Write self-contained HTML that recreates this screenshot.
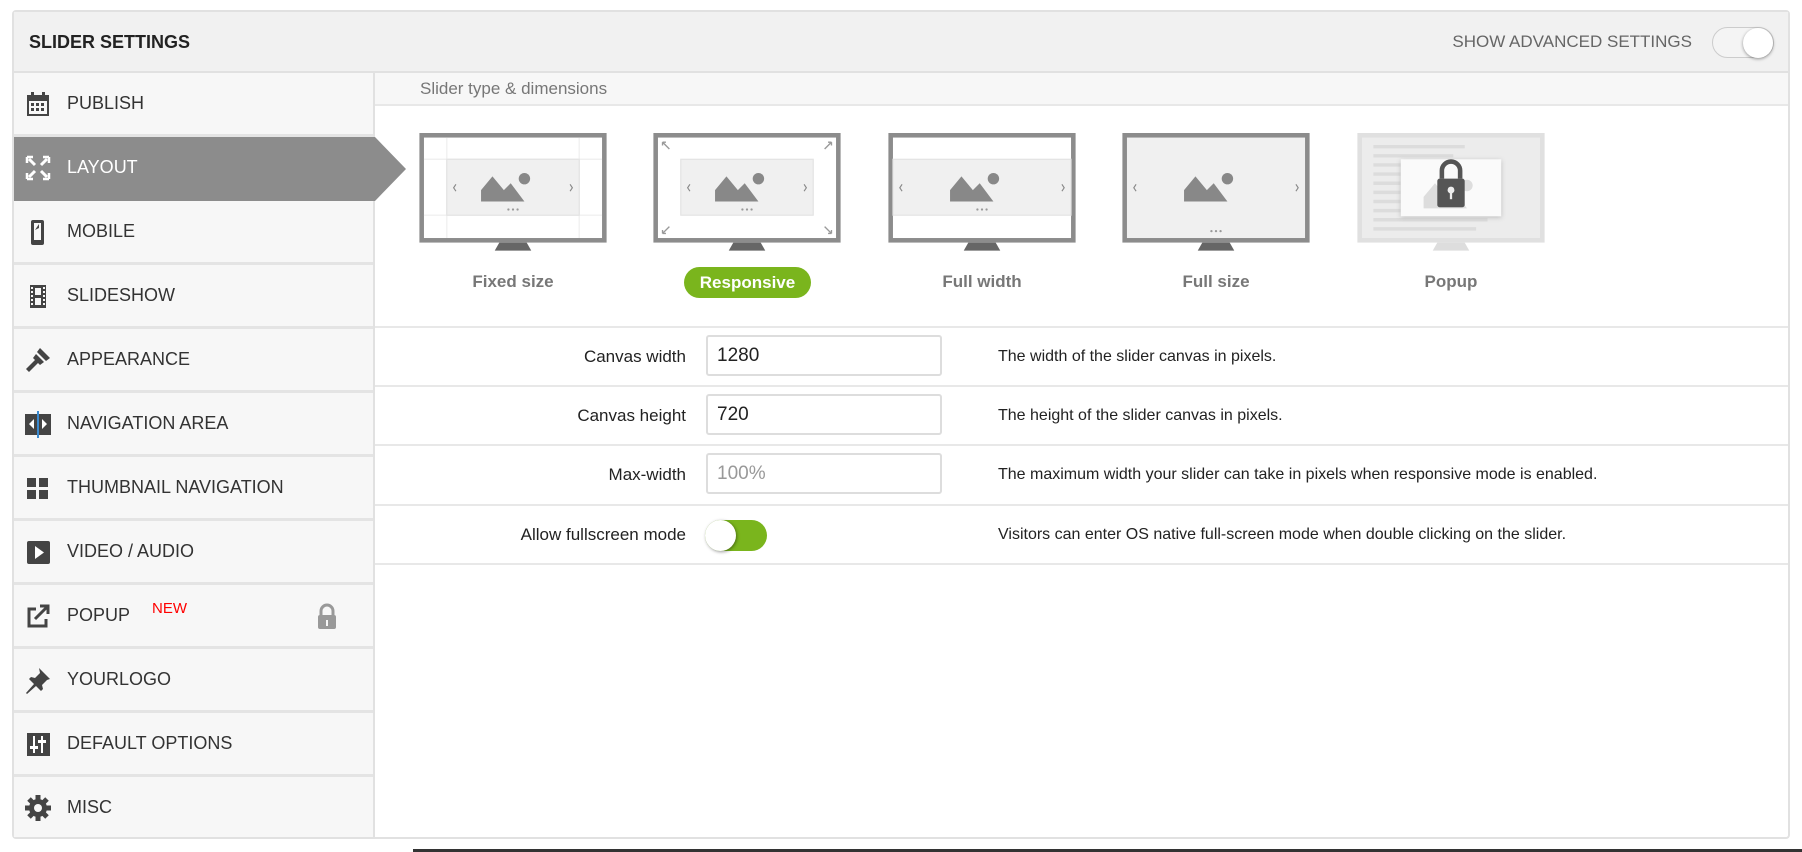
<!DOCTYPE html>
<html><head><meta charset="utf-8"><style>
*{box-sizing:border-box;margin:0;padding:0}
body{width:1802px;height:852px;background:#fff;font-family:"Liberation Sans",Arial,sans-serif;position:relative;overflow:hidden}
.panel{position:absolute;left:12px;top:10px;width:1778px;height:829px;border:2px solid #e1e1e1;border-radius:4px;background:#fff;overflow:visible}
.hdr{position:absolute;left:0;top:0;right:0;height:61px;background:#f1f1f1;border-bottom:2px solid #e1e1e1}
.hdr .t{position:absolute;left:15px;top:20px;font-size:18px;font-weight:bold;color:#222}
.hdr .a{position:absolute;right:96px;top:20px;font-size:17px;color:#666}
.tog{position:absolute;right:14px;top:15px;width:62px;height:31px;border-radius:16px;background:#f4f4f4;border:1px solid #ccc}
.tog i{position:absolute;right:0;top:0;width:30px;height:30px;border-radius:50%;background:#fff;box-shadow:0 1px 3px rgba(0,0,0,.4)}
.side{position:absolute;left:0;top:61px;width:361px;bottom:0;background:#f7f7f7;border-right:2px solid #e1e1e1}
.row{position:absolute;left:0;width:359px;height:64px;border-bottom:3px solid #e4e4e4;font-size:18px;color:#333}
.row span{position:absolute;left:53px;top:20px}
.row svg{position:absolute;left:10px;top:17px}
.row.act{background:#8c8c8c;color:#fff;border-bottom-color:#8c8c8c;width:361px}
.row.act:after{content:"";position:absolute;left:361px;top:0;border-left:31px solid #8c8c8c;border-top:32px solid transparent;border-bottom:32px solid transparent}
.sec{position:absolute;left:361px;right:0;top:61px;height:33px;background:#f7f7f7;border-bottom:2px solid #e8e8e8;font-size:17px;color:#777;padding:6px 0 0 45px}
.mon{position:absolute;top:121px}
.lbl{position:absolute;top:260px;font-size:17px;font-weight:bold;color:#777;text-align:center;width:188px}
.pill{position:absolute;left:670px;top:255px;width:127px;height:31px;border-radius:16px;background:#7ab51d;color:#fff;font-weight:bold;font-size:17px;text-align:center;line-height:31px}
.line{position:absolute;left:361px;right:0;height:2px;background:#e8e8e8}
.fl{position:absolute;right:1102px;font-size:17px;color:#222;text-align:right;width:300px}
.inp{position:absolute;left:692px;width:236px;height:41px;border:2px solid #ddd;border-radius:3px;font-size:19px;color:#222;padding:8px 0 0 9px}
.desc{position:absolute;left:984px;font-size:16px;color:#222}
.ft{position:absolute;left:691px;top:508px;width:62px;height:31px;border-radius:16px;background:#7ab51d}
.ft i{position:absolute;left:0;top:0;width:31px;height:31px;border-radius:50%;background:#fff;box-shadow:1px 1px 3px rgba(0,0,0,.4)}
</style></head><body>
<div class="panel">
<div class="hdr"><div class="t">SLIDER SETTINGS</div><div class="a">SHOW ADVANCED SETTINGS</div><div class="tog"><i></i></div></div>
<div class="side">
<div class="row" style="top:0"><svg width="28" height="28" viewBox="0 0 28 28"><rect x="3" y="5" width="22" height="21" fill="#444"/><rect x="5" y="11" width="18" height="13" fill="#f7f7f7"/><rect x="7" y="2" width="3" height="6" fill="#444"/><rect x="18" y="2" width="3" height="6" fill="#444"/><g fill="#444"><rect x="7" y="13" width="3" height="3"/><rect x="12" y="13" width="3" height="3"/><rect x="17" y="13" width="3" height="3"/><rect x="7" y="18" width="3" height="3"/><rect x="12" y="18" width="3" height="3"/><rect x="17" y="18" width="3" height="3"/></g></svg><span>PUBLISH</span></div>
<div class="row act" style="top:64px"><svg width="28" height="28" viewBox="0 0 28 28" stroke="#fff" stroke-width="3" fill="none"><path d="M5 5l6 6M23 5l-6 6M5 23l6-6M23 23l-6-6"/><path d="M3 3h6M3 3v6M25 3h-6M25 3v6M3 25h6M3 25v-6M25 25h-6M25 25v-6" stroke-width="2.5"/></svg><span>LAYOUT</span></div>
<div class="row" style="top:128px"><svg width="28" height="28" viewBox="0 0 28 28"><rect x="7" y="2" width="13" height="25" rx="2" fill="#444"/><rect x="10" y="5" width="7" height="17" fill="#f7f7f7"/><path d="M11 12l4-6v4z" fill="#444"/></svg><span>MOBILE</span></div>
<div class="row" style="top:192px"><svg width="28" height="28" viewBox="0 0 28 28"><rect x="6" y="3" width="16" height="23" fill="#444"/><rect x="11" y="6" width="6" height="7" fill="#f7f7f7"/><rect x="11" y="16" width="6" height="7" fill="#f7f7f7"/><g fill="#f7f7f7"><rect x="7" y="5" width="2" height="2"/><rect x="7" y="9" width="2" height="2"/><rect x="7" y="13" width="2" height="2"/><rect x="7" y="17" width="2" height="2"/><rect x="7" y="21" width="2" height="2"/><rect x="19" y="5" width="2" height="2"/><rect x="19" y="9" width="2" height="2"/><rect x="19" y="13" width="2" height="2"/><rect x="19" y="17" width="2" height="2"/><rect x="19" y="21" width="2" height="2"/></g></svg><span>SLIDESHOW</span></div>
<div class="row" style="top:256px"><svg width="28" height="28" viewBox="0 0 28 28" fill="#444"><path d="M16 2l10 10-4 3-9-9z"/><path d="M12 8l8 8-4 3-2-2-9 9-3-3 9-9-2-2z"/></svg><span>APPEARANCE</span></div>
<div class="row" style="top:320px"><svg width="28" height="28" viewBox="0 0 28 28"><rect x="1" y="4" width="26" height="21" fill="#444"/><rect x="13" y="1" width="2" height="28" fill="#3a8ad0"/><path d="M10 9l-5 5 5 5zM18 9l5 5-5 5z" fill="#fff"/></svg><span>NAVIGATION AREA</span></div>
<div class="row" style="top:384px"><svg width="28" height="28" viewBox="0 0 28 28" fill="#444"><rect x="3" y="4" width="9" height="9"/><rect x="15" y="4" width="9" height="9"/><rect x="3" y="16" width="9" height="9"/><rect x="15" y="16" width="9" height="9"/></svg><span>THUMBNAIL NAVIGATION</span></div>
<div class="row" style="top:448px"><svg width="28" height="28" viewBox="0 0 28 28"><rect x="3" y="3" width="23" height="23" rx="2" fill="#444"/><path d="M11 8v13l9-6.5z" fill="#fff"/></svg><span>VIDEO / AUDIO</span></div>
<div class="row" style="top:512px"><svg width="28" height="28" viewBox="0 0 28 28" fill="none" stroke="#444" stroke-width="3"><path d="M12 7H5v17h17v-7"/><path d="M11 17L23 5M16 4h8v8" /></svg><span>POPUP</span><b style="position:absolute;left:138px;top:15px;font-weight:normal;color:#f00;font-size:15px">NEW</b><svg style="left:302px;top:18px" width="22" height="28" viewBox="0 0 22 28"><path d="M5 12V8a6 6 0 0 1 12 0v4" fill="none" stroke="#999" stroke-width="3"/><rect x="2" y="12" width="18" height="14" rx="2" fill="#999"/><rect x="10" y="17" width="2" height="6" fill="#f7f7f7"/></svg></div>
<div class="row" style="top:576px"><svg width="28" height="28" viewBox="0 0 28 28" fill="#444"><path d="M15 2l11 11-3 1-5 5 1 4-2 2-5-5-9 8-1-1 8-9-5-5 2-2 4 1 5-5z"/></svg><span>YOURLOGO</span></div>
<div class="row" style="top:640px"><svg width="28" height="28" viewBox="0 0 28 28"><rect x="3" y="3" width="23" height="23" fill="#444"/><g fill="#fff"><rect x="9" y="6" width="2" height="17"/><rect x="17" y="6" width="2" height="17"/><rect x="6" y="16" width="8" height="3"/><rect x="14" y="10" width="8" height="3"/></g></svg><span>DEFAULT OPTIONS</span></div>
<div class="row" style="top:704px;border-bottom:none"><svg width="28" height="28" viewBox="0 0 28 28"><g fill="#444"><circle cx="14" cy="14" r="9"/><g stroke="#444" stroke-width="5"><path d="M14 1v26M1 14h26M5 5l18 18M23 5L5 23"/></g></g><circle cx="14" cy="14" r="4" fill="#f7f7f7"/></svg><span>MISC</span></div>
</div>
<div class="sec">Slider type &amp; dimensions</div>

<svg class="mon" style="left:405px" width="188" height="121" viewBox="0 0 164 106"><rect x="2" y="2" width="160" height="92" fill="#fff" stroke="#8c8c8c" stroke-width="4"/><g stroke="#eee"><path d="M24 4v88M140 4v88M4 23h156M4 72h156"/></g><rect x="24" y="23" width="116" height="49" fill="#f0f0f0" stroke="#e2e2e2"/><path d="M54 60V50l10-12 10 12 6-6 12 16z" fill="#888"/><circle cx="92" cy="40" r="5" fill="#888"/><path d="M32 45l-2 3 2 3M132 45l2 3-2 3" stroke="#888" fill="none"/><g fill="#999"><circle cx="78" cy="67" r="1"/><circle cx="82" cy="67" r="1"/><circle cx="86" cy="67" r="1"/></g><path d="M70 96h24l4 7H66z" fill="#666"/></svg>
<svg class="mon" style="left:639px" width="188" height="121" viewBox="0 0 164 106"><rect x="2" y="2" width="160" height="92" fill="#fff" stroke="#8c8c8c" stroke-width="4"/><rect x="24" y="23" width="116" height="49" fill="#f0f0f0" stroke="#e2e2e2"/><path d="M54 60V50l10-12 10 12 6-6 12 16z" fill="#888"/><circle cx="92" cy="40" r="5" fill="#888"/><path d="M32 45l-2 3 2 3M132 45l2 3-2 3" stroke="#888" fill="none"/><g fill="#999"><circle cx="78" cy="67" r="1"/><circle cx="82" cy="67" r="1"/><circle cx="86" cy="67" r="1"/></g><g stroke="#999" stroke-width="1.2" fill="none"><path d="M8 8l6 6M8 8h3M8 8v3M156 8l-6 6M156 8h-3M156 8v3M8 88l6-6M8 88h3M8 88v-3M156 88l-6-6M156 88h-3M156 88v-3"/></g><path d="M70 96h24l4 7H66z" fill="#666"/></svg>
<svg class="mon" style="left:874px" width="188" height="121" viewBox="0 0 164 106"><rect x="2" y="2" width="160" height="92" fill="#fff" stroke="#8c8c8c" stroke-width="4"/><rect x="4" y="23" width="156" height="49" fill="#f0f0f0" stroke="#e2e2e2"/><path d="M54 60V50l10-12 10 12 6-6 12 16z" fill="#888"/><circle cx="92" cy="40" r="5" fill="#888"/><path d="M12 45l-2 3 2 3M152 45l2 3-2 3" stroke="#888" fill="none"/><g fill="#999"><circle cx="78" cy="67" r="1"/><circle cx="82" cy="67" r="1"/><circle cx="86" cy="67" r="1"/></g><path d="M70 96h24l4 7H66z" fill="#666"/></svg>
<svg class="mon" style="left:1108px" width="188" height="121" viewBox="0 0 164 106"><rect x="2" y="2" width="160" height="92" fill="#f0f0f0" stroke="#8c8c8c" stroke-width="4"/><path d="M54 60V50l10-12 10 12 6-6 12 16z" fill="#888"/><circle cx="92" cy="40" r="5" fill="#888"/><path d="M12 45l-2 3 2 3M152 45l2 3-2 3" stroke="#888" fill="none"/><g fill="#999"><circle cx="78" cy="86" r="1"/><circle cx="82" cy="86" r="1"/><circle cx="86" cy="86" r="1"/></g><path d="M70 96h24l4 7H66z" fill="#666"/></svg>
<svg class="mon" style="left:1343px" width="188" height="121" viewBox="0 0 164 106"><rect x="2" y="2" width="160" height="92" fill="#ececec" stroke="#e0e0e0" stroke-width="4"/><g stroke="#dcdcdc" stroke-width="3"><path d="M14 12h80M14 20h70M14 28h90M14 36h100M14 44h90M14 52h105M14 60h85M14 68h95M14 76h100M14 84h90"/></g><rect x="38" y="23" width="88" height="50" fill="#fafafa" style="filter:drop-shadow(0 1px 2px #bbb)"/><path d="M58 66V56l10-12 10 12 6-6 12 16z" fill="#ddd"/><circle cx="96" cy="46" r="5" fill="#ddd"/><path d="M74 40v-7a8 8 0 0 1 16 0v7" fill="none" stroke="#555" stroke-width="4"/><rect x="70" y="40" width="24" height="25" rx="2" fill="#555"/><circle cx="82" cy="50" r="3" fill="#eee"/><rect x="81" y="50" width="2" height="8" fill="#eee"/><path d="M70 96h24l4 7H66z" fill="#ddd"/></svg>
<div class="lbl" style="left:405px">Fixed size</div>
<div class="pill">Responsive</div>
<div class="lbl" style="left:874px">Full width</div>
<div class="lbl" style="left:1108px">Full size</div>
<div class="lbl" style="left:1343px">Popup</div>

<div class="line" style="top:314px"></div>
<div class="line" style="top:373px"></div>
<div class="line" style="top:432px"></div>
<div class="line" style="top:492px"></div>
<div class="line" style="top:551px"></div>

<div class="fl" style="top:335px">Canvas width</div>
<div class="inp" style="top:323px">1280</div>
<div class="desc" style="top:336px">The width of the slider canvas in pixels.</div>
<div class="fl" style="top:394px">Canvas height</div>
<div class="inp" style="top:382px">720</div>
<div class="desc" style="top:395px">The height of the slider canvas in pixels.</div>
<div class="fl" style="top:453px">Max-width</div>
<div class="inp" style="top:441px;color:#999">100%</div>
<div class="desc" style="top:454px">The maximum width your slider can take in pixels when responsive mode is enabled.</div>
<div class="fl" style="top:513px">Allow fullscreen mode</div>
<div class="ft"><i></i></div>
<div class="desc" style="top:514px">Visitors can enter OS native full-screen mode when double clicking on the slider.</div>
</div>
<div style="position:absolute;left:413px;top:849px;width:1400px;height:3px;background:#333"></div>
</body></html>
